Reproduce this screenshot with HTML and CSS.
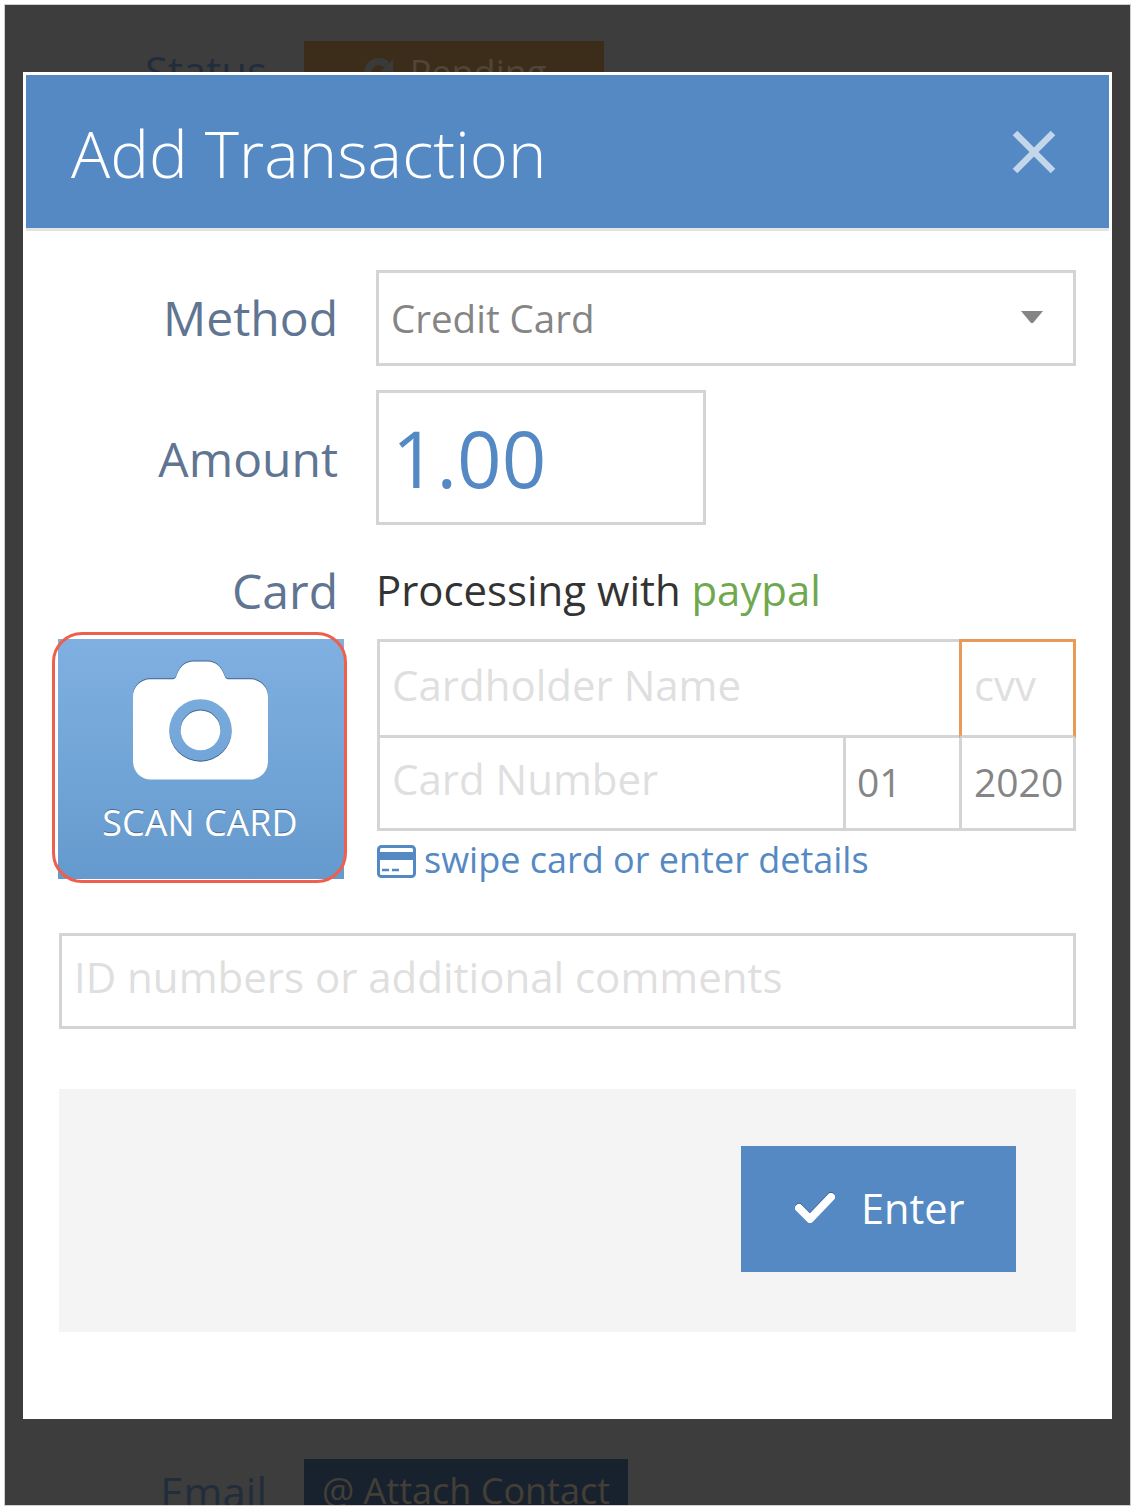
FILE: index.html
```html
<!DOCTYPE html>
<html lang="en">
<head>
<meta charset="utf-8">
<title>Add Transaction</title>
<link rel="stylesheet" href="styles.css">
</head>
<body>
<div class="frame">
  <div class="backdrop">
    <div class="bg-row bg-status">
      <span class="bg-label">Status</span>
      <span class="bg-btn bg-pending">
        <svg class="bg-refresh" viewBox="0 0 24 24" width="34" height="34"><path d="M20 12a8 8 0 1 1-2.600-5.900" fill="none" stroke="#3a3a3a" stroke-width="5"/><path d="M22 2v9h-9z" fill="#3a3a3a"/></svg>
        <span>Pending</span>
      </span>
    </div>
    <div class="bg-row bg-email">
      <span class="bg-label">Email</span>
      <span class="bg-btn bg-contact">@ Attach Contact</span>
    </div>
  </div>

  <div class="modal">
    <header class="modal-head">
      <h1 class="modal-title">Add Transaction</h1>
      <svg class="close-icon" viewBox="0 0 44 44" width="44" height="44"><path d="M3 3l38 38M41 3L3 41" stroke="#c3d6ea" stroke-width="6.500" fill="none"/></svg>
    </header>
    <div class="modal-body">
      <div class="row row-method">
        <div class="label">Method</div>
        <div class="box select">
          <span class="select-text">Credit Card</span>
          <svg class="caret" viewBox="0 0 22 12" width="22" height="12"><path d="M0 0h22L12 12h-2z" fill="#858585"/></svg>
        </div>
      </div>
      <div class="row row-amount">
        <div class="label">Amount</div>
        <div class="box amount">1.00</div>
      </div>
      <div class="row row-card">
        <div class="label">Card</div>
        <div class="processing">Processing with <span class="paypal">paypal</span></div>
      </div>
      <div class="row row-scan">
        <div class="scan-wrap">
          <button class="scan-btn" type="button">
            <svg class="camera" viewBox="0 0 136 120" width="135" height="120"><path fill="#fff" fill-rule="evenodd" d="M17 19h23c2 0 3-1 4-4 3-9 9-14 17-14h14c8 0 14 5 17 14 1 3 2 4 4 4h23c9 0 17 8 17 17v66c0 10-8 18-18 18H18c-10 0-18-8-18-18V36c0-9 8-17 17-17zM68 39a31.500 31.500 0 1 0 0 63 31.500 31.500 0 0 0 0-63zm0 11.500a20 20 0 1 1 0 40 20 20 0 0 1 0-40z"/></svg>
            <span class="scan-text">SCAN CARD</span>
          </button>
          <span class="scan-ring"></span>
        </div>
        <div class="card-col">
          <div class="card-grid">
            <div class="cell cell-name ph">Cardholder Name</div>
            <div class="cell cell-cvv ph">cvv</div>
            <div class="cell cell-number ph">Card Number</div>
            <div class="cell cell-val">01</div>
            <div class="cell cell-val cell-year">2020</div>
          </div>
          <div class="swipe">
            <svg class="card-icon" viewBox="0 0 39 33" width="39" height="33"><rect x="1.500" y="1.500" width="36" height="30" rx="3" fill="#fff" stroke="#5589c4" stroke-width="3"/><rect x="2" y="7" width="35" height="8" fill="#5589c4"/><path d="M5 25h7M15 25h7" stroke="#5589c4" stroke-width="2.500"/></svg>
            <span>swipe card or enter details</span>
          </div>
        </div>
      </div>
      <div class="box comment ph">ID numbers or additional comments</div>
      <div class="footer">
        <button class="enter-btn" type="button">
          <svg class="check" viewBox="0 0 40 32" width="40" height="32"><path d="M4 16l11 11L36 5" fill="none" stroke="#fff" stroke-width="8" stroke-linecap="round" stroke-linejoin="round"/></svg>
          <span class="enter-text">Enter</span>
        </button>
      </div>
    </div>
  </div>
</div>
</body>
</html>
```
FILE: styles.css
```css
* { box-sizing: border-box; }
html, body { margin: 0; padding: 0; }
body {
  width: 1135px;
  height: 1510px;
  background: #fff;
  font-family: "Open Sans", "Noto Sans", sans-serif;
  padding: 4px;
  overflow: hidden;
}
.frame {
  position: relative;
  width: 1127px;
  height: 1502px;
  border: 1px solid #cfcfcf;
  background: #3d3d3d;
  overflow: hidden;
}
.backdrop {
  height: 100%;
  display: flex;
  flex-direction: column;
  justify-content: space-between;
  padding-top: 36px;
}
.bg-row {
  display: flex;
  align-items: flex-start;
  height: 46px;
}
.bg-label {
  width: 262px;
  text-align: right;
  font-size: 42px;
  line-height: 46px;
  color: #222d3b;
  flex: none;
  margin-right: 37px;
  padding-top: 7px;
}
.bg-email .bg-label { padding-top: 10px; }
.bg-btn {
  display: flex;
  align-items: flex-start;
  justify-content: center;
  gap: 14px;
  font-size: 36px;
  line-height: 46px;
  height: 92px;
}
.bg-pending { width: 300px; background: #3c2d1b; color: #4f4638; padding-top: 9px; }
.bg-contact { width: 324px; background: #18222f; color: #443f36; height: 46px; padding-top: 9px; flex: none; white-space: nowrap; }
.bg-refresh { flex: none; margin-top: 6px; }

.modal {
  position: absolute;
  left: 18px;
  top: 67px;
  width: 1089px;
  height: 1347px;
  background: #fff;
  border: 3px solid #fff;
}
.modal-head {
  height: 156px;
  background: #5589c4;
  border-bottom: 3px solid #e3e3e3;
  display: flex;
  align-items: center;
  justify-content: space-between;
  padding: 0 53px 0 45px;
}
.modal-title {
  margin: 2px 0 0;
  font-size: 65.200px;
  font-weight: 300;
  line-height: 1;
  color: #fff;
}
.close-icon { flex: none; margin-top: 1px; }
.modal-body { padding: 39px 33px 0; }
.row {
  display: grid;
  grid-template-columns: 285px 1fr;
  column-gap: 32px;
  align-items: center;
}
.label {
  text-align: right;
  padding-right: 6px;
  font-size: 48px;
  line-height: 60px;
  color: #5f7591;
}
.row-amount .label, .row-card .label { padding-top: 2px; }
.box { border: 3px solid #d4d4d4; background: #fff; }
.select {
  height: 96px;
  display: flex;
  align-items: center;
  justify-content: space-between;
  padding: 0 30px 0 12px;
  font-size: 38.500px;
  color: #858585;
}
.caret { flex: none; margin-top: -2px; }
.row-amount { margin-top: 24px; }
.amount {
  width: 330px;
  height: 135px;
  padding-left: 13px;
  font-size: 78px;
  line-height: 131px;
  color: #5589c4;
}
.row-card { margin-top: 33px; height: 64px; }
.processing {
  font-size: 41.900px;
  line-height: 64px;
  color: #333;
}
.paypal { color: #6fa84f; }
.row-scan { margin-top: 17px; align-items: start; }
.scan-wrap { position: relative; margin-left: -1px; width: 286px; height: 240px; }
.scan-btn {
  display: flex;
  flex-direction: column;
  align-items: center;
  width: 100%;
  height: 100%;
  padding: 21px 0 0;
  border: 0;
  background: linear-gradient(#80b0e1, #659ace);
  color: #fff;
  font-family: inherit;
}
.camera { flex: none; margin-right: 1px; filter: drop-shadow(0 -1px 0 rgba(40, 70, 110, .7)); }
.scan-text {
  margin-top: 19px;
  margin-right: 2px;
  font-size: 36px;
  font-weight: 400;
  line-height: 48px;
  white-space: nowrap;
  text-shadow: 0 -1px 0 rgba(40, 70, 110, .6);
}
.scan-ring {
  position: absolute;
  left: -6px;
  top: -7px;
  width: 295px;
  height: 251px;
  border: 3px solid #ee5f4c;
  border-radius: 30px;
  pointer-events: none;
}
.card-col { margin-left: 1px; }
.card-grid {
  display: grid;
  grid-template-columns: 466px 116px 114px;
  grid-template-rows: 96px 93px;
  border-top: 3px solid #d4d4d4;
  border-left: 3px solid #d4d4d4;
}
.cell {
  border-right: 3px solid #d4d4d4;
  border-bottom: 3px solid #d4d4d4;
  padding: 0 0 8px 12px;
  display: flex;
  align-items: center;
  font-size: 42px;
  white-space: nowrap;
}
.ph { color: #dfdfdf; }
.cell-name { grid-column: 1 / 3; border-right: 0; }
.cell-number { padding-bottom: 10px; }
.cell-cvv {
  margin: -3px 0 0 -3px;
  border: 3px solid #e89b57;
  border-bottom-color: #d4d4d4;
  padding-left: 12px;
}
.cell-val { font-size: 39px; color: #858585; padding: 0 0 4px 11px; }
.cell-year { padding-left: 12px; }
.swipe {
  display: flex;
  align-items: center;
  gap: 8px;
  margin-top: 14px;
  font-size: 36px;
  line-height: 32px;
  color: #5589c4;
}
.swipe span { margin-top: -3px; }
.card-icon { flex: none; }
.comment {
  margin-top: 54px;
  height: 96px;
  padding: 0 0 10px 12px;
  display: flex;
  align-items: center;
  font-size: 42px;
}
.footer {
  margin-top: 60px;
  height: 243px;
  background: #f4f4f4;
  padding: 57px 60px 0 0;
  display: flex;
  justify-content: flex-end;
  align-items: flex-start;
}
.enter-btn {
  display: flex;
  align-items: center;
  gap: 26px;
  width: 275px;
  height: 126px;
  padding: 0 0 0 54px;
  border: 0;
  background: #5589c4;
  color: #fff;
  font-family: inherit;
  font-size: 41.500px;
}
.enter-text { margin-top: -3px; }
.check { flex: none; margin-top: -2px; filter: drop-shadow(0 -1px 0 rgba(40, 70, 110, .6)); }
```
